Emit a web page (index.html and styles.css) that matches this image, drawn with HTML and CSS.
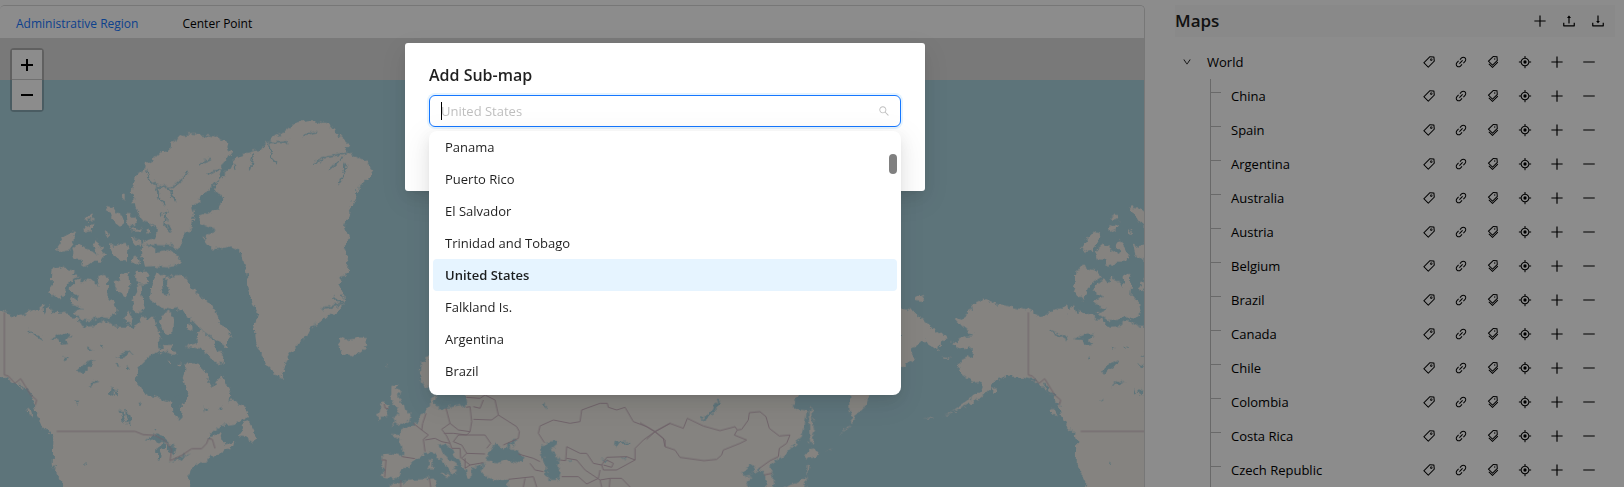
FILE: index.html
```html
<!DOCTYPE html>
<html lang="en">
<head>
<meta charset="utf-8">
<title>Maps</title>
<link rel="stylesheet" href="styles.css">
</head>
<body>
<svg class="sprite" aria-hidden="true">
  <symbol id="plus" viewBox="0 0 1024 1024"><path d="M482 152h60q8 0 8 8v704q0 8-8 8h-60q-8 0-8-8V160q0-8 8-8z"/><path d="M160 474h704q8 0 8 8v60q0 8-8 8H160q-8 0-8-8v-60q0-8 8-8z"/></symbol>
  <symbol id="minus" viewBox="0 0 1024 1024"><path d="M872 474H152c-4.400 0-8 3.600-8 8v60c0 4.400 3.600 8 8 8h720c4.400 0 8-3.600 8-8v-60c0-4.400-3.600-8-8-8z"/></symbol>
  <symbol id="tag" viewBox="0 0 1024 1024"><path d="M938 458.800l-29.600-312.600c-1.500-16.200-14.400-29-30.600-30.600L566.200 86h-.4c-3.200 0-5.700 1-7.600 2.900L88.900 558.200a9.960 9.960 0 000 14.100l362.800 362.800c1.900 1.900 4.400 2.900 7.100 2.900s5.200-1 7.100-2.900l469.300-469.300c2-2.100 3-4.900 2.800-7zM459.700 834.700L189.300 564.300 589 164.600 836 188l23.400 247-399.700 399.700zM680 256c-48.500 0-88 39.500-88 88s39.500 88 88 88 88-39.500 88-88-39.500-88-88-88zm0 120c-17.700 0-32-14.300-32-32s14.300-32 32-32 32 14.300 32 32-14.300 32-32 32z"/></symbol>
  <symbol id="link" viewBox="0 0 1024 1024"><path d="M574 665.400a8.030 8.030 0 00-11.300 0L446.500 781.600c-53.800 53.800-144.600 59.500-204 0-59.500-59.500-53.800-150.200 0-204l116.200-116.200c3.100-3.100 3.100-8.200 0-11.300l-39.800-39.800a8.030 8.030 0 00-11.300 0L191.400 526.500c-84.600 84.600-84.600 221.500 0 306s221.500 84.600 306 0l116.200-116.200c3.100-3.100 3.100-8.200 0-11.300L574 665.400zm258.600-474c-84.600-84.600-221.500-84.600-306 0L410.300 307.600a8.030 8.030 0 000 11.300l39.700 39.700c3.100 3.100 8.200 3.100 11.300 0l116.200-116.200c53.800-53.800 144.600-59.500 204 0 59.500 59.500 53.800 150.200 0 204L665.300 562.600a8.030 8.030 0 000 11.300l39.800 39.800c3.100 3.100 8.200 3.100 11.300 0l116.200-116.200c84.500-84.600 84.500-221.500 0-306.100zM610.100 372.300a8.030 8.030 0 00-11.300 0L372.300 598.700a8.030 8.030 0 000 11.300l39.600 39.600c3.100 3.100 8.200 3.100 11.300 0l226.400-226.400c3.100-3.100 3.100-8.200 0-11.300l-39.500-39.600z"/></symbol>
  <symbol id="tags" viewBox="0 0 1024 1024"><path d="M483.200 790.300L861.400 412c1.700-1.700 2.500-4 2.300-6.300l-25.500-301.400c-.7-7.800-6.800-13.900-14.600-14.600L522.200 64.300c-2.300-.2-4.700.6-6.300 2.300L137.700 444.800a8.030 8.030 0 000 11.300l334.200 334.200c3.100 3.200 8.200 3.200 11.300 0zm62.600-651.700l224.600 19 19 224.600L477.500 694 233.900 450.500l311.900-311.900zm60.160 186.230a48 48 0 1067.880-67.890 48 48 0 10-67.880 67.890zM889.700 539.800l-39.600-39.500a8.030 8.030 0 00-11.300 0l-362 361.300-237.600-237a8.030 8.030 0 00-11.300 0l-39.600 39.500a8.030 8.030 0 000 11.300l243.200 242.800 39.600 39.500c3.100 3.100 8.200 3.100 11.300 0l407.300-406.600c3.100-3.100 3.100-8.200 0-11.300z"/></symbol>
  <symbol id="aim" viewBox="0 0 1024 1024"><path d="M952 474H829.800C812.500 327.600 696.400 211.500 550 194.200V72c0-4.400-3.600-8-8-8h-60c-4.400 0-8 3.600-8 8v122.200C327.600 211.500 211.500 327.600 194.200 474H72c-4.400 0-8 3.600-8 8v60c0 4.400 3.600 8 8 8h122.200C211.500 696.400 327.600 812.500 474 829.800V952c0 4.400 3.600 8 8 8h60c4.400 0 8-3.600 8-8V829.800C696.400 812.500 812.500 696.400 829.800 550H952c4.400 0 8-3.600 8-8v-60c0-4.400-3.600-8-8-8zM512 756c-134.800 0-244-109.200-244-244s109.200-244 244-244 244 109.200 244 244-109.200 244-244 244z"/><circle cx="512" cy="512" r="120"/></symbol>
  <symbol id="down" viewBox="0 0 1024 1024"><path d="M884 256h-75c-5.100 0-9.900 2.500-12.900 6.600L512 654.200 227.900 262.600c-3-4.100-7.800-6.600-12.900-6.600h-75c-6.500 0-10.300 7.400-6.500 12.700l352.600 486.100c12.800 17.600 39 17.600 51.700 0l352.600-486.100c3.900-5.300.1-12.700-6.400-12.700z"/></symbol>
  <symbol id="search" viewBox="0 0 1024 1024"><path d="M909.600 854.500L649.900 594.800C690.200 542.700 712 479 712 412c0-80.200-31.300-155.400-87.900-212.100-56.600-56.700-132-87.900-212.100-87.900s-155.500 31.300-212.100 87.900C143.200 256.500 112 331.800 112 412c0 80.100 31.300 155.500 87.900 212.100C256.500 680.800 331.800 712 412 712c67 0 130.600-21.800 182.700-62l259.700 259.600a8.200 8.200 0 0011.600 0l43.600-43.500a8.200 8.200 0 000-11.600zM570.400 570.400C528 612.700 471.800 636 412 636s-116-23.300-158.400-65.600C211.300 528 188 471.800 188 412s23.300-116.100 65.600-158.400C296 211.300 352.200 188 412 188s116.100 23.200 158.400 65.600S636 352.200 636 412s-23.300 116.100-65.600 158.400z"/></symbol>
  <symbol id="upload" viewBox="0 0 1024 1024"><path d="M400 317.700h73.900V656c0 4.400 3.600 8 8 8h60c4.400 0 8-3.600 8-8V317.700H624c6.700 0 10.400-7.700 6.300-12.900L518.300 163a8 8 0 00-12.600 0l-112 141.700c-4.100 5.300-.4 13 6.300 13z"/><path d="M878 626h-60c-4.400 0-8 3.600-8 8v154H214V634c0-4.400-3.600-8-8-8h-60c-4.400 0-8 3.600-8 8v198c0 17.700 14.300 32 32 32h684c17.700 0 32-14.300 32-32V634c0-4.400-3.600-8-8-8z"/></symbol>
  <symbol id="download" viewBox="0 0 1024 1024"><path d="M505.700 661a8 8 0 0012.600 0l112-141.700c4.100-5.200.4-12.900-6.300-12.900h-74.100V168c0-4.400-3.600-8-8-8h-60c-4.400 0-8 3.600-8 8v338.300H400c-6.700 0-10.400 7.700-6.300 12.900l112 141.800z"/><path d="M878 626h-60c-4.400 0-8 3.600-8 8v154H214V634c0-4.400-3.600-8-8-8h-60c-4.400 0-8 3.600-8 8v198c0 17.700 14.300 32 32 32h684c17.700 0 32-14.300 32-32V634c0-4.400-3.600-8-8-8z"/></symbol>
</svg>

<div class="app">
  <main class="viewer">
    <nav class="tabs">
      <button class="tab tab-active" type="button">Administrative Region</button>
      <button class="tab" type="button">Center Point</button>
    </nav>
    <div class="map">
      <svg class="world" viewBox="0 -186 3432 1347" preserveAspectRatio="xMinYMin slice" aria-hidden="true">
        <defs>
          <filter id="coast" filterUnits="userSpaceOnUse" x="-40" y="-100" width="3520" height="1300" color-interpolation-filters="sRGB">
            <feTurbulence type="fractalNoise" baseFrequency="0.05" numOctaves="3" seed="4" result="n"/>
            <feDisplacementMap in="SourceGraphic" in2="n" scale="24" xChannelSelector="R" yChannelSelector="G"/>
          </filter>
          <g id="america">
            <path class="land" d="M-60 620L0 628 15 636 45 650 75 640 105 625 112 630 130 612 133 640 150 615 158 640 170 630 185 645 200 640 212 655 235 655 240 672 262 680 290 678 312 660 345 680 390 680 400 690 415 665 432 645 440 660 462 650 468 680 482 710 475 730 480 750 445 772 415 800 408 830 415 850 430 880 480 895 515 908 517 930 537 962 545 955 542 912 560 900 565 880 548 840 552 820 555 790 590 790 612 810 625 825 622 845 640 860 655 840 664 825 690 870 700 900 735 925 743 945 730 960 705 975 670 978 640 990 618 1015 670 995 665 1010 670 1030 700 1025 695 1045 660 1060 615 1085 590 1090 575 1110 565 1170H192L165 1110 158 1090 160 1020 155 1005 125 975 110 945 105 915 80 880 45 850 25 835 0 830-60 830z"/>
            <path class="land" d="M158 505L180 500 200 508 215 512 233 530 218 540 200 555 190 580 175 598 160 585 146 572 155 545zM205 570L225 545 240 535 252 550 262 535 285 545 300 560 295 530 315 525 325 545 322 585 345 610 350 635 330 655 300 650 275 660 250 660 220 640 250 625 218 615 212 598 235 590zM343 548L360 540 368 520 388 515 390 545 392 575 375 592 362 580 350 565zM405 515L447 515 440 545 425 555 412 550 402 535zM398 600L412 575 410 555 422 555 425 590 430 620 435 630 415 640 398 625zM376 650L388 632 395 650 392 675 378 670zM170 445L190 415 210 395 230 400 215 430 210 450 190 455 178 450zM217 450L240 430 258 445 275 455 290 460 278 435 288 420 300 440 310 455 318 465 305 485 285 485 255 500 243 492 250 480 225 478zM326 428L340 440 360 430 380 425 385 450 383 485 360 482 345 470 335 465zM318 318L340 322 360 340 372 370 360 380 345 368 330 345zM380 340L400 348 408 368 395 380 383 368zM252 355L280 343 284 360 262 362zM252 380L280 372 278 392 255 398zM397 385L422 385 420 395 398 395zM314 385L325 400 328 408 318 405zM395 412L420 418 422 438 400 430zM398 465L415 465 420 490 405 495 395 485zM362 280L374 282 374 298 366 290zM438 390L450 390 450 404 440 402zM466 384L478 384 476 398 468 396z"/>
            <path class="land" d="M428 430L450 440 470 455 510 450 535 470 540 485 530 498 500 502 470 498 435 500 430 480 425 455zM450 595L455 550 470 525 490 522 498 530 483 545 485 575 498 595 500 610 470 610 455 605zM500 530L540 528 565 540 575 565 600 590 625 605 645 630 655 660 680 690 693 705 685 720 680 745 660 730 640 715 620 700 600 685 575 660 555 645 545 625 520 630 490 625 465 610 500 590 510 570 498 550zM480 665L490 640 505 635 525 650 520 690 505 710 490 700zM478 760L490 735 512 735 530 760 515 765 495 755zM555 740L590 730 590 700 605 690 620 705 640 720 650 750 670 765 668 790 640 785 620 760 600 745zM560 670L575 668 578 685 565 692zM502 780L515 782 512 792zM535 790L542 792 538 800z"/>
            <path class="land" d="M413 215L430 220 435 190 460 178 490 148 510 155 515 125 550 105 580 102 640 108 675 125 697 155 680 175 665 205 655 235 620 275 600 300 575 315 582 345 575 380 550 400 552 430 540 442 500 436 440 435 425 428 460 415 470 385 455 370 430 360 405 325 395 270z"/>
            <path class="land" d="M720 1010L725 990 738 962 752 980 768 1010 762 1030 740 1015zM85 925L92 930 98 952 88 945zM125 970L150 980 172 1002 160 1005 140 990z"/>
            <path class="land" d="M642 270L650 245 675 220 690 205 700 180 725 163 750 155 785 150 800 125 830 105 855 95 885 70 930 62 990 72 1005 90 1020 110 1048 135 1035 155 1060 165 1100 185 1120 210 1100 240 1080 260 1065 295 1045 340 1035 380 1050 415 1030 440 1045 480 1040 520 1015 550 1030 585 1032 615 1000 645 940 675 925 705 890 735 868 760 855 800 845 833 815 815 795 790 780 750 765 715 760 680 775 640 755 610 745 560 738 510 720 455 690 440 640 448 610 410 655 392 598 372 600 350 655 325 670 290z"/>
            <path class="land" d="M1012 725L1025 712 1045 720 1080 712 1098 715 1102 735 1085 755 1060 770 1030 762 1020 742z"/>
            <path class="sea" d="M434 1022L460 1000 490 1010 512 1030 490 1030 460 1018zM470 1080L472 1050 485 1030 500 1035 485 1055 478 1082zM500 1035L530 1040 522 1065 510 1060zM510 1085L545 1070 570 1060 540 1080zM230 815L250 795 285 780 270 800 245 818zM150 718L190 700 212 702 195 720 205 732 180 735 175 720zM262 858L280 842 300 848 275 855zM358 930L370 940 380 975 366 960zM375 930L388 945 392 975 382 965zM255 1085L265 1092 258 1095zM336 860L342 880 332 885zM345 770L380 755 400 758 370 770zM460 985L466 982 464 992zM525 885L545 888 538 900zM192 772L204 774 198 782zM345 790L360 796 350 804zM380 795L392 806 382 812zM344 874L352 866 350 886zM222 902L240 902 232 908zM415 910L425 905 422 918zM260 742L275 746 266 752zM300 735L310 742 304 746zM615 920L625 930 618 935zM660 925L668 920 666 932z"/>
            <path class="fjord" d="M440 205L450 240 480 262 520 262 545 240 562 212M470 262L480 300 495 320M505 262L528 302M480 345L500 335 495 375 515 395M598 192L630 178M620 225L660 205M700 190L712 208M760 160L752 205M805 130L815 175 830 195M865 126L835 128 800 126M955 98L910 106M940 192L975 170 1040 160M990 208L1030 175M1018 250L1040 190M1000 590L1030 615M965 625L1032 612M700 885L690 905M60 850L100 910M70 860L95 890M80 690L130 720"/>
          </g>
        </defs>
        <rect class="sea" x="0" y="-60" width="3432" height="1240"/>
        <g filter="url(#coast)">
          <use href="#america"/>
          <use href="#america" x="3072"/>
          <path class="land" transform="translate(2640 240)" d="M460 395L430 388 350 372 315 355 280 375 258 405 230 422 245 440 262 455 282 465 255 468 216 488 240 508 278 505 278 525 245 540 235 560 245 580 265 595 275 612 310 608 300 635 260 665 215 695 232 690 300 655 330 625 350 592 362 600 390 575 410 588 460 590zM60 388L100 395 125 415 150 435 165 460 185 458 200 475 180 490 178 512 165 512 150 490 130 480 110 500 90 505 108 545 80 555 60 562zM102 360L118 347 134 355 125 365 105 363zM183 525L210 533 205 537zM330 625L352 625 340 642zM185 705L215 698 214 702zM130 716L160 712 160 716z"/>
          <path class="land" transform="translate(1110 840)" d="M180 -70L155 -55 150 -30 152 0 165 22 200 30 200 45H180L180 75 160 98 145 120 130 135 95 152 90 165 72 160 70 168 90 180 98 205 96 230 60 222 32 225 38 245 35 290 75 300 95 275 130 245 135 235 160 222 180 215 200 225 215 245 240 268 245 285 258 275 250 262 265 260 240 240 215 215 205 195 225 190 240 205 265 235 275 250 285 270 295 290 305 285 305 265 345 250 335 265 340 285 370 300 412 300 415 330H1145L1125 310 1150 288 1130 290 1115 280 1130 262 1155 255 1145 280 1170 265 1185 290 1190 330H1205L1212 310 1210 285 1195 258 1230 235 1250 220 1280 190 1300 160 1310 95 1280 90 1265 75 1290 45V-60H350L288 45 292 72 240 82 200 85 190 75 195 45zM55 330L60 312 130 300 195 295 198 330z"/>
          <path class="land" transform="translate(1110 840)" d="M62 18L82 12 78 30 90 35 85 52 98 65 105 90 122 105 118 120 95 130 65 138 75 125 70 112 88 100 80 80 70 70 60 50zM28 85L40 70 55 72 55 90 50 112 25 120 22 105zM180 235L188 238 187 270 180 268zM210 282L238 282 232 295zM50 -50L54 -45 50 -40z"/>
          <path class="land" transform="translate(1920 840)" d="M506 95L512 82 522 150 516 165 523 188 510 185 508 150zM508 200L538 222 525 235 510 230 498 240 500 225zM500 250L508 265 500 290 480 305 450 315 425 330H495L500 310zM628 40L628 80 632 110 638 127 655 100 670 85 692 40zM550 215L575 202 572 206zM600 165L628 135 624 145z"/>
          <path class="sea" transform="translate(1110 840)" d="M350 245L352 225 362 205 378 190 395 205 415 200 430 180 442 180 430 195 420 205 445 215 462 235 460 250 410 240 385 250zM510 205L530 185 560 182 558 195 545 205 560 230 572 245 565 260 572 275 568 300 540 300 525 285 528 255 515 230zM735 200L738 186 782 184 782 190 745 192 740 204zM995 120L1020 100 1040 60 1047 60 1040 85 1018 112 998 124zM200 45H285L285 72 240 80 215 70zM522 75L530 65 530 90zM690 240L712 240 705 246zM755 235L775 232 770 238zM590 240L600 236 598 246z"/>
        </g>
        <path id="northline" class="border" d="M13 637V825L25 828 45 850 62 836 80 865 92 885 110 900 106 915M170 994H405L430 1004 465 1006 495 1022 515 1048 510 1082 545 1066 575 1046 605 1046 620 1030 625 1016 637 1018 645 1045"/>
        <use href="#northline" x="3072"/>
        <path class="border" transform="translate(1110 840)" d="M43 72L45 84 55 86M35 240L48 240 44 292M96 230L135 236M130 130L155 150 158 130 168 100M155 150L175 165 160 178 165 215M165 180L195 175 215 185 240 190 230 168 215 148 240 130 228 85M240 130L265 150 300 155 305 125 300 80 288 82M288 52L330 55 345 45 375 60 385 105 365 120 310 118M310 80L330 85 340 60M385 105L440 140 448 155 445 175 400 195M300 155L290 165 250 160 222 160M250 185L265 165 345 165 362 190 350 205M250 185L275 195 290 220 345 222M290 220L275 235 300 255 340 248M240 190L245 205 270 205 272 235M285 235L285 265 300 255M445 222L490 235 510 245M480 250L495 270 520 275M415 298L490 290 500 321M465 295L460 321M523 188L505 160 510 138 550 120 600 130 630 125 635 90 690 70 712 70 715 82 740 90 765 82 790 125 830 140 855 155 820 180 795 205 795 240 770 230 710 232 695 255 670 250 650 220 630 220 590 200 587 242 570 240M590 235L620 240 645 270 690 300 720 295 755 295 780 321M695 255L700 270 740 270 795 240M575 290L625 290 650 312 685 295 690 270M710 240L730 250 725 262 700 255M855 155L900 130M690 300L695 321M720 295L718 321M92 300V321M178 295L182 321M855 155L885 180 885 200"/>
        <path class="border" transform="translate(1920 840)" d="M45 155L90 130 130 145 142 115 190 138 240 152 285 140 292 150 283 165 320 180 300 190 250 210 245 225 230 238 192 242 120 232 105 210 75 200 70 175 45 155M45 155L20 178M292 150L305 148 325 120 328 98 360 95 378 110 388 145 418 168 450 165 440 190 418 205 415 230 390 242 358 265M372 285L395 280M0 128L45 155"/>
      </svg>
      <div class="zoom">
        <button class="zoom-btn" type="button" aria-label="Zoom in"><svg viewBox="0 0 12 12"><path d="M6 0v12M0 6h12"/></svg></button>
        <button class="zoom-btn" type="button" aria-label="Zoom out"><svg viewBox="0 0 12 12"><path d="M0 6h12"/></svg></button>
      </div>
    </div>
  </main>

  <aside class="side">
    <header class="side-head">
      <h2 class="side-title">Maps</h2>
      <div class="side-tools">
        <button class="icon-btn" type="button" aria-label="Add map"><svg class="icon-lg"><use href="#plus"/></svg></button>
        <button class="icon-btn" type="button" aria-label="Upload"><svg class="icon-lg"><use href="#upload"/></svg></button>
        <button class="icon-btn" type="button" aria-label="Download"><svg class="icon-lg"><use href="#download"/></svg></button>
      </div>
    </header>
    <ul class="tree" id="tree"></ul>
  </aside>
</div>

<div class="mask">
  <section class="dialog" role="dialog" aria-labelledby="dialog-title">
    <label class="dialog-title" id="dialog-title" for="region">Add Sub-map</label>
    <div class="select">
      <input class="select-input" id="region" type="text" role="combobox" aria-expanded="true" aria-controls="options" placeholder="United States">
      <span class="caret"></span>
      <svg class="select-icon"><use href="#search"/></svg>
      <div class="dropdown">
        <ul class="options" id="options" role="listbox">
          <li class="option" role="option">Panama</li>
          <li class="option" role="option">Puerto Rico</li>
          <li class="option" role="option">El Salvador</li>
          <li class="option" role="option">Trinidad and Tobago</li>
          <li class="option option-selected" role="option" aria-selected="true">United States</li>
          <li class="option" role="option">Falkland Is.</li>
          <li class="option" role="option">Argentina</li>
          <li class="option" role="option">Brazil</li>
        </ul>
        <span class="thumb"></span>
      </div>
    </div>
  </section>
</div>
<script src="tree.js"></script>
</body>
</html>
```

FILE: styles.css
```css
* { box-sizing: border-box; }

body {
  margin: 0;
  height: 100vh;
  overflow: hidden;
  background: #fff;
  color: #000;
  font: 13px/22px "Open Sans", "Noto Sans", sans-serif;
}

button {
  margin: 0;
  padding: 0;
  border: 0;
  background: none;
  color: inherit;
  font: inherit;
}

ul { margin: 0; padding: 0; list-style: none; }

.sprite { display: none; }

.app {
  display: flex;
  gap: 30px;
  height: 100%;
  padding: 5px 9px 0 0;
}

/* map viewer */
.viewer {
  display: flex;
  flex: 1;
  flex-direction: column;
  min-width: 0;
  border: 1px solid #d9d9d9;
  border-width: 1px 1px 0 0;
  border-radius: 5px 5px 0 0;
  overflow: hidden;
}

.tabs {
  display: flex;
  gap: 44px;
  height: 32px;
  padding: 3px 16px 0;
  background: #fff;
  font-size: 12px;
}

.tab-active { color: #1677ff; }

.map {
  position: relative;
  flex: 1;
  min-height: 0;
  background: #ddd;
}

.world { display: block; width: 100%; height: 100%; }
.land { fill: #f2efe9; }
.sea { fill: #aad3df; }
.fjord { fill: none; stroke: #aad3df; stroke-width: 5; }
.border { fill: none; stroke: #cbb4c0; stroke-width: 3; }

.zoom {
  position: absolute;
  top: 10px;
  left: 10px;
  width: 34px;
  border: 2px solid rgba(0, 0, 0, .2);
  border-radius: 4px;
}

.zoom-btn {
  display: grid;
  place-items: center;
  width: 30px;
  height: 30px;
  background: #fff;
}

.zoom-btn:first-child { border-bottom: 1px solid #ccc; }
.zoom-btn svg { width: 12px; height: 12px; }
.zoom-btn path { stroke: #000; stroke-width: 2; }

/* side panel */
.side { width: 440px; }

.side-head {
  display: flex;
  align-items: center;
  justify-content: space-between;
  height: 32px;
  margin-bottom: 8px;
  padding-right: 9px;
  background: #fafafa;
}

.side-title { margin: 0; color: #222; font-size: 17px; font-weight: 600; line-height: 24px; }
.side-tools { display: flex; gap: 13px; }

.icon-btn {
  display: grid;
  place-items: center;
  width: 32px;
  height: 34px;
}

.side-tools .icon-btn { width: 16px; height: 32px; }
.icon-btn svg { width: 14px; height: 14px; }
.icon-btn .icon-lg { width: 16px; height: 16px; }

.node {
  display: flex;
  align-items: center;
  height: 34px;
  padding-right: 10px;
}

.node-name { flex: 1; }
.toggle { display: grid; place-items: center; width: 24px; height: 24px; margin-right: 8px; }
.toggle svg { width: 10px; height: 10px; }

.children { margin-left: 35px; border-left: 1px solid #bfbfbf; margin-top: 2px; }
.child { display: flex; align-items: flex-start; }
.child:first-child { margin-top: -2px; }
.child .node { flex: 1; }
.twig { width: 10px; height: 14px; margin-right: 10px; border-bottom: 1px solid #bfbfbf; }

/* dialog */
.mask {
  position: fixed;
  inset: 0;
  display: flex;
  align-items: flex-start;
  padding: 43px 0 0 405px;
  background: rgba(0, 0, 0, .45);
}

.dialog {
  width: 520px;
  padding: 20px 24px 64px;
  border-radius: 3px;
  background: #fff;
  color: rgba(0, 0, 0, .88);
  box-shadow: 0 6px 16px rgba(0, 0, 0, .08), 0 3px 6px -4px rgba(0, 0, 0, .12), 0 9px 28px 8px rgba(0, 0, 0, .05);
}

.dialog-title {
  display: block;
  margin-bottom: 8px;
  font-size: 16px;
  font-weight: 600;
  line-height: 24px;
}

.select { position: relative; }

.select-input {
  display: block;
  width: 100%;
  height: 32px;
  padding: 0 32px 0 11px;
  border: 1px solid #1677ff;
  border-radius: 6px;
  outline: 0;
  background: #fff;
  box-shadow: 0 0 0 2px rgba(5, 145, 255, .1);
  font: inherit;
}

.select-input::placeholder { color: #bfbfbf; opacity: 1; }
.caret { position: absolute; top: 7px; left: 12px; width: 1px; height: 18px; background: #000; }
.select-icon { position: absolute; top: 10px; right: 11px; width: 12px; height: 12px; fill: #bfbfbf; }

.dropdown {
  position: absolute;
  top: 36px;
  right: 0;
  left: 0;
  padding: 0 4px 8px;
  border-radius: 8px;
  background: #fff;
  box-shadow: 0 6px 16px rgba(0, 0, 0, .08), 0 3px 6px -4px rgba(0, 0, 0, .12), 0 9px 28px 8px rgba(0, 0, 0, .05);
}

.option { padding: 5px 12px; border-radius: 4px; }
.option-selected { background: #e6f4ff; font-weight: 600; }

.thumb {
  position: absolute;
  top: 23px;
  right: 4px;
  width: 8px;
  height: 20px;
  border-radius: 4px;
  background: #808080;
}
```

FILE: tree.js
```js
const countries = ["China", "Spain", "Argentina", "Australia", "Austria", "Belgium",
  "Brazil", "Canada", "Chile", "Colombia", "Costa Rica", "Czech Republic"];

const actions = [["tag", "Label"], ["link", "Link"], ["tags", "Labels"],
  ["aim", "Center"], ["plus", "Add sub-map", "icon-lg"], ["minus", "Remove", "icon-lg"]];

const icon = (id, size = "icon") => `<svg class="${size}"><use href="#${id}"/></svg>`;

const node = (name, toggle = "") => `<div class="node">${toggle}<span class="node-name">${name}</span>${
  actions.map(([id, label, size]) =>
    `<button class="icon-btn" type="button" aria-label="${label} ${name}">${icon(id, size)}</button>`).join("")
}</div>`;

const toggle = `<button class="toggle" type="button" aria-label="Collapse World">${icon("down")}</button>`;

document.getElementById("tree").innerHTML = `<li>${node("World", toggle)}<ul class="children">${
  countries.map((c) => `<li class="child"><span class="twig"></span>${node(c)}</li>`).join("")
}</ul></li>`;
```
